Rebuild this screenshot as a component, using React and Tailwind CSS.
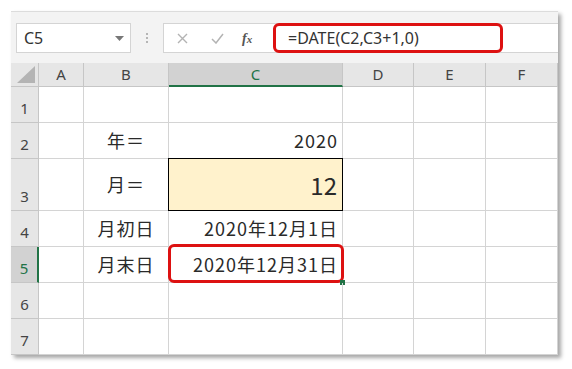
import React from "react";

const cols = [
  { key: "A", w: "w-[45px]" },
  { key: "B", w: "w-[85px]" },
  { key: "C", w: "w-[174px]" },
  { key: "D", w: "w-[71px]" },
  { key: "E", w: "w-[72px]" },
  { key: "F", w: "w-[72px]" },
];

const rows = [
  { n: 1, h: "h-[36px]" },
  { n: 2, h: "h-[36px]", b: "年＝", c: "2020" },
  { n: 3, h: "h-[52px]", b: "月＝", c: "12", big: true },
  { n: 4, h: "h-[36px]", b: "月初日", c: "2020年12月1日" },
  { n: 5, h: "h-[36px]", b: "月末日", c: "2020年12月31日", selected: true },
  { n: 6, h: "h-[36px]" },
  { n: 7, h: "h-[36px]" },
];

const cellFont = { fontFamily: '"Noto Sans CJK JP", "Noto Sans", sans-serif' };

function Toolbar() {
  return (
    <div className="flex h-[52px] items-start bg-[#f3f3f3] pt-[11px] border-t border-[#dcdcdc]">
      {/* Name box */}
      <div className="ml-[5px] flex h-[30px] w-[115px] items-center justify-between border border-[#d4d4d4] bg-white pl-[7px] pr-[6px]">
        <span className="text-[16px] text-[#333]" style={{ fontFamily: '"Noto Sans", sans-serif' }}>C5</span>
        <svg width="9" height="5" viewBox="0 0 9 5">
          <path d="M0 0h9L4.5 5z" fill="#777" />
        </svg>
      </div>
      {/* separator dots */}
      <div className="flex h-[30px] w-[32px] flex-col items-center justify-center gap-[2px]">
        <span className="h-[2px] w-[2px] bg-[#b5b5b5]" />
        <span className="h-[2px] w-[2px] bg-[#b5b5b5]" />
        <span className="h-[2px] w-[2px] bg-[#b5b5b5]" />
      </div>
      {/* formula bar */}
      <div className="flex h-[30px] flex-1 items-stretch border-y border-l border-[#d4d4d4] bg-white">
        <div className="flex w-[109px] items-center">
          <svg className="ml-[13px]" width="11" height="11" viewBox="0 0 11 11">
            <path d="M1 1l9 9M10 1l-9 9" stroke="#b3b3b3" strokeWidth="1.4" />
          </svg>
          <svg className="ml-[23px]" width="13" height="11" viewBox="0 0 13 11">
            <path d="M1 6l4 4 7-9" stroke="#b3b3b3" strokeWidth="1.5" fill="none" />
          </svg>
          <span
            className="ml-[18px] text-[14px] italic font-bold text-[#555]"
            style={{ fontFamily: '"Liberation Serif", serif' }}
          >
            f<span className="text-[11px]">x</span>
          </span>
        </div>
        <div className="-my-px flex w-[230px] items-center rounded-[6px] border-[3px] border-[#dd1111] pl-[12px]">
          <span className="text-[16px] text-[#333]" style={{ fontFamily: '"Noto Sans", sans-serif' }}>
            =DATE(C2,C3+1,0)
          </span>
        </div>
      </div>
    </div>
  );
}

function HeaderRow() {
  return (
    <div className="flex h-[24px] bg-[#e6e6e6]">
      <div className="relative w-[28px] border-r border-b border-[#c6c6c6]">
        <svg className="absolute bottom-[3px] right-[3px]" width="18" height="17" viewBox="0 0 18 17">
          <path d="M18 0v17H0z" fill="#b4b4b4" />
        </svg>
      </div>
      {cols.map((c) => (
        <div
          key={c.key}
          className={`${c.w} flex items-center justify-center border-r text-[15px] ${
            c.key === "C"
              ? "bg-[#d2d2d2] border-b-2 border-b-[#217346] border-r-[#c6c6c6] text-[#217346]"
              : "border-b border-[#c6c6c6] text-[#444]"
          }`}
          style={{ fontFamily: '"Noto Sans", sans-serif' }}
        >
          {c.key}
        </div>
      ))}
    </div>
  );
}

function Row({ r }) {
  return (
    <div className={`flex ${r.h}`}>
      <div
        className={`flex w-[28px] items-end justify-center pb-[3px] text-[15px] border-b border-[#c6c6c6] ${
          r.selected
            ? "bg-[#d2d2d2] border-r-2 border-r-[#217346] text-[#217346]"
            : "bg-[#e6e6e6] border-r border-r-[#c6c6c6] text-[#444]"
        }`}
        style={{ fontFamily: '"Noto Sans", sans-serif' }}
      >
        {r.n}
      </div>
      {cols.map((c) => {
        if (c.key === "B") {
          return (
            <div
              key={c.key}
              className={`${c.w} flex items-center justify-center border-r border-b border-[#d4d4d4] text-[18px] tracking-[1px] text-[#2a2a2a]`}
              style={cellFont}
            >
              {r.b}
            </div>
          );
        }
        if (c.key === "C") {
          return (
            <div
              key={c.key}
              className={`${c.w} relative flex items-center justify-end text-[#2a2a2a] ${
                r.big
                  ? "bg-[#fff2cc] border border-black text-[24px] -mt-px -ml-px w-[175px] pr-[5px]"
                  : "border-r border-b border-[#d4d4d4] text-[18px] tracking-[1px] pr-[4px]"
              }`}
              style={cellFont}
            >
              {r.c}
              {r.selected && (
                <>
                  <div className="absolute -left-px -top-[3px] -bottom-px -right-[2px] rounded-[6px] border-[3px] border-[#dd1111]" />
                  <div className="absolute -right-[3px] -bottom-[3px] h-[5px] w-[5px] bg-[#217346]" />
                </>
              )}
            </div>
          );
        }
        return <div key={c.key} className={`${c.w} border-r border-b border-[#d4d4d4]`} />;
      })}
    </div>
  );
}

export default function App() {
  return (
    <div className="h-[369px] w-[572px] bg-white pl-[11px] pt-[11px]">
      <div className="flex w-[547px] flex-col overflow-hidden bg-white shadow-[3px_3px_4px_rgba(0,0,0,0.35)]">
        <Toolbar />
        <HeaderRow />
        {rows.map((r) => (
          <Row key={r.n} r={r} />
        ))}
      </div>
    </div>
  );
}
